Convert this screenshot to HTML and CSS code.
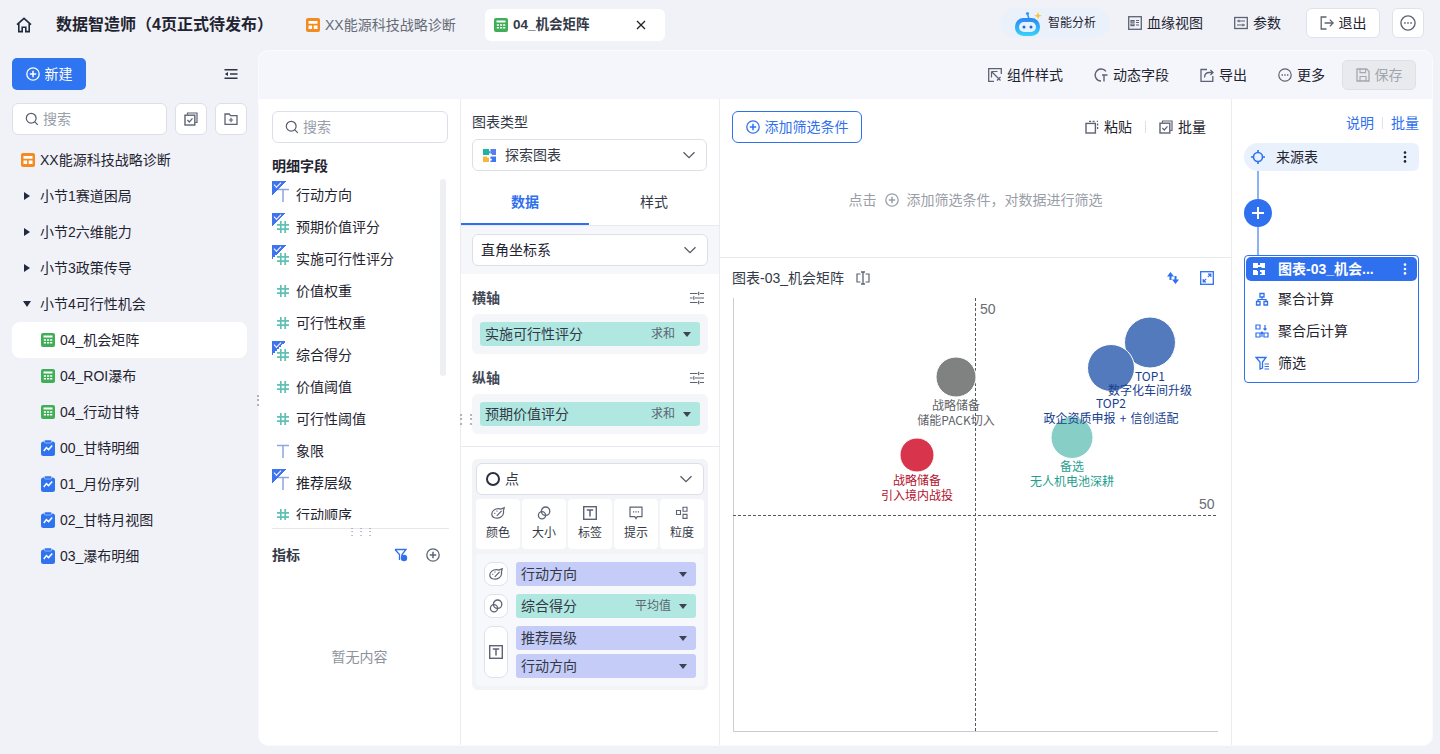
FILE: index.html
```html
<!DOCTYPE html>
<html lang="zh">
<head>
<meta charset="utf-8">
<title>数据智造师</title>
<link rel="stylesheet" href="styles.css">
</head>
<body>
<svg class="defs" width="0" height="0">
  <defs>
    <linearGradient id="rb" x1="0" y1="0" x2="0" y2="1"><stop offset="0" stop-color="#2c86f4"/><stop offset="1" stop-color="#37d3fb"/></linearGradient>
    <symbol id="dash" viewBox="0 0 14 14"><rect width="14" height="14" rx="2" fill="#f58a1f"/><path d="M2.5 3h9v2.800h-9zM2.500 7.600h3.600v3.400H2.500zM7.700 7.600h3.800v3.400H7.700z" fill="#fff"/></symbol>
    <symbol id="sheet" viewBox="0 0 14 14"><rect width="14" height="14" rx="2" fill="#3fae56"/><path d="M2.500 2.600h9v2h-9zM2.800 6.200h2.200v1.600H2.800zM6 6.200h2.200v1.600H6zM9.100 6.200h2.200v1.600H9.100zM2.800 9h2.200v1.600H2.800zM6 9h2.200v1.600H6zM9.100 9h2.200v1.600H9.100z" fill="#fff"/></symbol>
    <symbol id="wave" viewBox="0 0 14 16"><rect y="1.500" width="14" height="14.500" rx="2.500" fill="#2f74ee"/><rect x="3.500" y="0" width="7" height="3" rx="1" fill="#2f74ee" stroke="#cfe0fb" stroke-width=".6"/><path d="M2.800 11 5.400 7.600l2.200 2 3.600-4" fill="none" stroke="#fff" stroke-width="1.500"/></symbol>
    <symbol id="plusc" viewBox="0 0 14 14"><circle cx="7" cy="7" r="6.200" fill="none" stroke="currentColor" stroke-width="1.300"/><path d="M7 3.800v6.400M3.800 7h6.400" stroke="currentColor" stroke-width="1.500"/></symbol>
    <symbol id="search" viewBox="0 0 14 14"><circle cx="6.200" cy="6.200" r="4.900" fill="none" stroke="currentColor" stroke-width="1.200"/><path d="m9.800 9.800 3 3" stroke="currentColor" stroke-width="1.200"/></symbol>
    <symbol id="batch" viewBox="0 0 14 14"><path d="M3.500 2.800V1h9.500v9.500h-1.800" fill="none" stroke="currentColor" stroke-width="1.200"/><rect x="1" y="3.200" width="9.800" height="9.800" fill="none" stroke="currentColor" stroke-width="1.400"/><path d="m3.400 8 1.900 2 3.200-3.600" fill="none" stroke="currentColor" stroke-width="1.200"/></symbol>
    <symbol id="paste" viewBox="0 0 14 14"><rect x="1" y="3.400" width="9.400" height="9.600" fill="none" stroke="currentColor" stroke-width="1.400"/><path d="M4 1.300h2M7.600 1.300h2M11.800 1.300h1.200M12.600 3.500v2M12.600 7v2" stroke="currentColor" stroke-width="1.300"/></symbol>
    <symbol id="chev" viewBox="0 0 14 14"><path d="m1.500 4.200 5.500 5.500 5.500-5.500" fill="none" stroke="currentColor" stroke-width="1.300"/></symbol>
    <symbol id="sliders" viewBox="0 0 14 14"><path d="M0 2.500h7.500M10 2.500h4M0 7h2.500M5 7h9M0 11.500h7.500M10 11.500h4M8.700 .8v3.400M3.800 5.300v3.400M8.700 9.800v3.400" stroke="currentColor" stroke-width="1.200" fill="none"/></symbol>
    <symbol id="palette" viewBox="0 0 14 14"><path d="M.8 8C.8 4.800 4 2.600 7.400 2.600c1 0 1.800.2 2.600.5l3.200-1.400-.8 3.300c.5 2.200-.3 4.400-2.200 5.700-1.800 1.300-4.600 1.700-6.800 1C1.900 11.200.8 9.800.8 8Z" fill="none" stroke="currentColor" stroke-width="1.200"/><path d="m5.800 9.800 4.800-5M3.300 7.400h1M5.500 5.200h1" stroke="currentColor" stroke-width="1.200"/></symbol>
    <symbol id="size" viewBox="0 0 14 14"><circle cx="8.600" cy="5.200" r="4.200" fill="none" stroke="currentColor" stroke-width="1.300"/><circle cx="5" cy="9.200" r="3.600" fill="none" stroke="currentColor" stroke-width="1.300"/></symbol>
    <symbol id="label" viewBox="0 0 14 14"><rect x=".7" y=".7" width="12.600" height="12.600" fill="none" stroke="currentColor" stroke-width="1.400"/><path d="M3.800 4h6.400M7 4v6.400" stroke="currentColor" stroke-width="1.500"/></symbol>
    <symbol id="tip" viewBox="0 0 14 14"><path d="M1 1.200h12v9.400H8.200L7 12.600l-1.200-2H1Z" fill="none" stroke="currentColor" stroke-width="1.200"/><path d="M4 5.800h1.200M6.400 5.800h1.200M8.800 5.800H10" stroke="currentColor" stroke-width="1.300"/></symbol>
    <symbol id="grain" viewBox="0 0 14 14"><path d="M1.500 4.500h4v4h-4zM8 1.200h4v4H8zM8 8.400h4v4H8z" fill="none" stroke="currentColor" stroke-width="1.100"/></symbol>
    <symbol id="more" viewBox="0 0 14 14"><circle cx="7" cy="7" r="6.200" fill="none" stroke="currentColor" stroke-width="1.200"/><path d="M3.600 7h1.400M6.300 7h1.400M9 7h1.400" stroke="currentColor" stroke-width="1.400"/></symbol>
    <symbol id="puzzle" viewBox="0 0 14 14"><path d="M0 0h6.500v2.500H8v2H6.500V6.500H0z" fill="#20b3a4"/><path d="M8 0h6v6.500H9.500V5H8z" fill="#5b7cf0"/><path d="M0 8h4.500v1.500h2V14H0z" fill="#f5b83d"/><path d="M8 8h6v6H8v-1.500h1.500v-2H8z" fill="#3f78ee"/></symbol>
    <symbol id="dots" viewBox="0 0 14 14"><circle cx="7" cy="2.600" r="1.300" fill="currentColor"/><circle cx="7" cy="7" r="1.300" fill="currentColor"/><circle cx="7" cy="11.400" r="1.300" fill="currentColor"/></symbol>
    <symbol id="hash" viewBox="0 0 12 12"><path d="M3.800 0v12M8.200 0v12M0 3.800h12M0 8.200h12" stroke="#5fc0b3" stroke-width="1.700" fill="none"/></symbol>
    <symbol id="ttype" viewBox="0 0 12 14"><path d="M0 1.500h12M6 1.500V14" stroke="#8ea6de" stroke-width="1.500" fill="none"/></symbol>
  </defs>
</svg>

<div class="app">
  <header class="header">
    <svg class="home" viewBox="0 0 16 16"><path d="M1 7.600 8 1.400l7 6.200M2.800 6.400v8.200h3.400v-4.400h3.600v4.400h3.400V6.400" fill="none" stroke="#1f2a3c" stroke-width="1.600"/></svg>
    <h1 class="title">数据智造师（4页正式待发布）</h1>
    <div class="tab tab-off"><svg class="ic"><use href="#dash"/></svg><span>XX能源科技战略诊断</span></div>
    <div class="tab tab-on"><svg class="ic"><use href="#sheet"/></svg><span class="tab-name">04_机会矩阵</span><svg class="close" viewBox="0 0 10 10"><path d="m1 1 8 8M9 1 1 9" stroke="#222" stroke-width="1.300"/></svg></div>
    <div class="head-right">
      <div class="ai">
        <svg class="robot" viewBox="0 0 27 25"><path d="M14 8 12.500 3" stroke="#2d9cf5" stroke-width="1.600"/><circle cx="12.500" cy="2.500" r="1.600" fill="#2d9cf5"/><path d="m23 1 1 2.800 2.800 1-2.800 1-1 2.800-1-2.800-2.800-1 2.800-1z" fill="#f6c33c"/><rect x="0" y="7" width="25" height="18" rx="8.500" fill="url(#rb)"/><rect x="4" y="11" width="17" height="10" rx="5" fill="#e6f3ff"/><circle cx="9" cy="16" r="1.500" fill="#2762d8"/><circle cx="16" cy="16" r="1.500" fill="#2762d8"/></svg>
        <span>智能分析</span>
      </div>
      <div class="h-link lineage"><svg class="ic dim" viewBox="0 0 14 14"><rect x=".7" y=".7" width="12.600" height="12.600" fill="none" stroke="currentColor" stroke-width="1.300"/><path d="M3 4.500h3v1.600H3zM3 8h3v1.600H3zM8 4.500h3M8 9h3M8 6.500h3" stroke="currentColor" stroke-width="1.200" fill="none"/></svg><span>血缘视图</span></div>
      <div class="h-link params"><svg class="ic dim" viewBox="0 0 14 14"><rect x=".7" y="1.500" width="12.600" height="11" fill="none" stroke="currentColor" stroke-width="1.300"/><path d="M3 5h8M3 9h8M5 3.800v2.400M9 7.800v2.400" stroke="currentColor" stroke-width="1.200"/></svg><span>参数</span></div>
      <button class="h-btn exit"><svg class="ic dim" viewBox="0 0 14 14"><path d="M6.500 1H1.200v12h5.300" fill="none" stroke="currentColor" stroke-width="1.300"/><path d="M4.600 7h8.600M9.800 3.600 13.200 7l-3.400 3.400" fill="none" stroke="currentColor" stroke-width="1.300"/></svg><span>退出</span></button>
      <button class="h-btn kebab"><svg class="ic16 dim"><use href="#more"/></svg></button>
    </div>
  </header>

  <div class="body">
    <aside class="side">
      <div class="side-top">
        <button class="new"><svg class="ic"><use href="#plusc"/></svg><span>新建</span></button>
        <svg class="ic collapse" viewBox="0 0 14 14"><path d="M.5 2h13v1.600H.5zM6 6.200h7.500v1.600H6zM.5 10.400h13V12H.5zM4 5v4L.8 7z" fill="#2b3444"/></svg>
      </div>
      <div class="side-search">
        <div class="search"><svg class="ic"><use href="#search"/></svg><span>搜索</span></div>
        <button class="sq"><svg class="ic dim"><use href="#batch"/></svg></button>
        <button class="sq"><svg class="ic dim" viewBox="0 0 14 14"><path d="M1 2h4.200l1.400 1.600H13v8.800H1z" fill="none" stroke="currentColor" stroke-width="1.300"/><path d="M7 5.800v4.400M4.800 8h4.400" stroke="currentColor" stroke-width="1.200"/></svg></button>
      </div>
      <ul class="tree">
        <li class="node root"><svg class="ic"><use href="#dash"/></svg><span>XX能源科技战略诊断</span></li>
        <li class="node sec"><i class="tri-r"></i><span>小节1赛道困局</span></li>
        <li class="node sec"><i class="tri-r"></i><span>小节2六维能力</span></li>
        <li class="node sec"><i class="tri-r"></i><span>小节3政策传导</span></li>
        <li class="node sec"><i class="tri-d"></i><span>小节4可行性机会</span></li>
        <li class="node leaf on"><svg class="ic"><use href="#sheet"/></svg><span>04_机会矩阵</span></li>
        <li class="node leaf"><svg class="ic"><use href="#sheet"/></svg><span>04_ROI瀑布</span></li>
        <li class="node leaf"><svg class="ic"><use href="#sheet"/></svg><span>04_行动甘特</span></li>
        <li class="node leaf"><svg class="ic-w"><use href="#wave"/></svg><span>00_甘特明细</span></li>
        <li class="node leaf"><svg class="ic-w"><use href="#wave"/></svg><span>01_月份序列</span></li>
        <li class="node leaf"><svg class="ic-w"><use href="#wave"/></svg><span>02_甘特月视图</span></li>
        <li class="node leaf"><svg class="ic-w"><use href="#wave"/></svg><span>03_瀑布明细</span></li>
      </ul>
      <span class="grip grip-side">⋮</span>
    </aside>

    <main class="main">
      <div class="toolbar">
        <div class="t-item"><svg class="ic dim" viewBox="0 0 14 14"><path d="M13.300 6V.7H.7v12.600H6" fill="none" stroke="currentColor" stroke-width="1.300"/><path d="m3.500 3.500 9 9M3.500 3.500v6M3.500 3.500h6M9 12.500l3.500-3.500" fill="none" stroke="currentColor" stroke-width="1.200"/></svg><span>组件样式</span></div>
        <div class="t-item"><svg class="ic dim" viewBox="0 0 14 14"><path d="M12 3.400A6 6 0 1 0 7 13" fill="none" stroke="currentColor" stroke-width="1.400"/><path d="M8 7h5.500M10 7v6.500" stroke="currentColor" stroke-width="1.400"/></svg><span>动态字段</span></div>
        <div class="t-item"><svg class="ic dim" viewBox="0 0 14 14"><path d="M7 1.500H1v11.800h11.800V8" fill="none" stroke="currentColor" stroke-width="1.300"/><path d="M4.500 9.500c0-3 2-5 5-5H13M10.500 2 13 4.500 10.500 7" fill="none" stroke="currentColor" stroke-width="1.300"/></svg><span>导出</span></div>
        <div class="t-item"><svg class="ic dim"><use href="#more"/></svg><span>更多</span></div>
        <button class="save"><svg class="ic" viewBox="0 0 14 14"><path d="M1 1h9.600L13 3.400V13H1z" fill="none" stroke="currentColor" stroke-width="1.300"/><path d="M4 1v3.600h5.600V1M4 13V8.500h6V13" fill="none" stroke="currentColor" stroke-width="1.100"/></svg><span>保存</span></button>
      </div>

      <div class="cols">
        <section class="fields">
          <div class="search f-search"><svg class="ic"><use href="#search"/></svg><span>搜索</span></div>
          <h3 class="f-head">明细字段</h3>
          <div class="f-list">
            <div class="f-row"><i class="badge"></i><svg class="ic12 t-ic"><use href="#ttype"/></svg><span>行动方向</span></div>
            <div class="f-row"><i class="badge"></i><svg class="ic12"><use href="#hash"/></svg><span>预期价值评分</span></div>
            <div class="f-row"><i class="badge"></i><svg class="ic12"><use href="#hash"/></svg><span>实施可行性评分</span></div>
            <div class="f-row"><svg class="ic12"><use href="#hash"/></svg><span>价值权重</span></div>
            <div class="f-row"><svg class="ic12"><use href="#hash"/></svg><span>可行性权重</span></div>
            <div class="f-row"><i class="badge"></i><svg class="ic12"><use href="#hash"/></svg><span>综合得分</span></div>
            <div class="f-row"><svg class="ic12"><use href="#hash"/></svg><span>价值阈值</span></div>
            <div class="f-row"><svg class="ic12"><use href="#hash"/></svg><span>可行性阈值</span></div>
            <div class="f-row"><svg class="ic12 t-ic"><use href="#ttype"/></svg><span>象限</span></div>
            <div class="f-row"><i class="badge"></i><svg class="ic12 t-ic"><use href="#ttype"/></svg><span>推荐层级</span></div>
            <div class="f-row"><svg class="ic12"><use href="#hash"/></svg><span>行动顺序</span></div>
            <i class="thumb"></i>
          </div>
          <div class="f-split"><span>⋮⋮⋮</span></div>
          <div class="m-head"><h3>指标</h3><div class="m-icons"><svg class="ic blue" viewBox="0 0 14 14"><path d="M1 1.500h11L8 6.500V10" fill="none" stroke="currentColor" stroke-width="1.300"/><path d="M1 1.500 5.500 6.500V12" fill="none" stroke="currentColor" stroke-width="1.300"/><circle cx="10" cy="10" r="3.200" fill="currentColor"/></svg><svg class="ic dim"><use href="#plusc"/></svg></div></div>
          <p class="empty">暂无内容</p>
        </section>

        <section class="config">
          <div class="c-type">
            <div class="c-label">图表类型</div>
            <div class="select"><svg class="ic12 puzzle"><use href="#puzzle"/></svg><span class="sel-text">探索图表</span><svg class="ic chev"><use href="#chev"/></svg></div>
          </div>
          <div class="tabs"><div class="ctab on">数据</div><div class="ctab">样式</div></div>
          <div class="coord"><div class="select wide"><span class="sel-text dark">直角坐标系</span><svg class="ic chev"><use href="#chev"/></svg></div></div>
          <div class="axis">
            <div class="ax-head"><b>横轴</b><svg class="ic dim"><use href="#sliders"/></svg></div>
            <div class="well"><div class="pill green"><span>实施可行性评分</span><em>求和</em><i class="caret"></i></div></div>
            <div class="ax-head ax2"><b>纵轴</b><svg class="ic dim"><use href="#sliders"/></svg></div>
            <div class="well"><div class="pill green"><span>预期价值评分</span><em>求和</em><i class="caret"></i></div></div>
          </div>
          <div class="marks">
            <div class="select mark-sel"><i class="ring"></i><span class="sel-dot">点</span><svg class="ic chev"><use href="#chev"/></svg></div>
            <div class="enc">
              <div class="enc-b"><svg class="ic dim"><use href="#palette"/></svg><span>颜色</span></div>
              <div class="enc-b"><svg class="ic dim"><use href="#size"/></svg><span>大小</span></div>
              <div class="enc-b"><svg class="ic dim"><use href="#label"/></svg><span>标签</span></div>
              <div class="enc-b"><svg class="ic dim"><use href="#tip"/></svg><span>提示</span></div>
              <div class="enc-b"><svg class="ic dim"><use href="#grain"/></svg><span>粒度</span></div>
            </div>
            <div class="bind">
              <div class="b-row"><div class="b-ic"><svg class="ic dim"><use href="#palette"/></svg></div><div class="pill purple"><span>行动方向</span><i class="caret"></i></div></div>
              <div class="b-row"><div class="b-ic"><svg class="ic dim"><use href="#size"/></svg></div><div class="pill green"><span>综合得分</span><em>平均值</em><i class="caret"></i></div></div>
              <div class="b-row"><div class="b-ic tall"><svg class="ic dim"><use href="#label"/></svg></div>
                <div class="b-stack"><div class="pill purple"><span>推荐层级</span><i class="caret"></i></div><div class="pill purple"><span>行动方向</span><i class="caret"></i></div></div>
              </div>
            </div>
          </div>
          <span class="grip grip-cfg">⋮⋮</span>
        </section>

        <section class="center">
          <div class="filter">
            <div class="f-top">
              <button class="add"><svg class="ic"><use href="#plusc"/></svg><span>添加筛选条件</span></button>
              <div class="f-acts">
                <div class="act"><svg class="ic dim"><use href="#paste"/></svg><span>粘贴</span></div>
                <i class="vsep"></i>
                <div class="act"><svg class="ic dim"><use href="#batch"/></svg><span>批量</span></div>
              </div>
            </div>
            <div class="hint"><span>点击</span><svg class="ic"><use href="#plusc"/></svg><span>添加筛选条件，对数据进行筛选</span></div>
          </div>
          <div class="chart-head">
            <span>图表-03_机会矩阵</span>
            <svg class="ic dim" viewBox="0 0 14 14"><path d="M4.500 3H1v8h3.500M9.500 3H13v8H9.500" fill="none" stroke="currentColor" stroke-width="1.200"/><path d="M5 1h4M5 13h4M7 1v12" stroke="currentColor" stroke-width="1.300"/></svg>
            <div class="ch-right">
              <svg class="ic blue" viewBox="0 0 14 14"><path d="M4.500 1 1 5.500h2.500V9h2V5.500H8zM9.500 13 13 8.500h-2.500V5h-2v3.500H6z" fill="currentColor"/></svg>
              <svg class="ic blue" viewBox="0 0 14 14"><rect x=".7" y=".7" width="12.600" height="12.600" fill="none" stroke="currentColor" stroke-width="1.300"/><path d="M8 3.200h2.800V6M10.800 3.200 7.800 6.200M6 10.800H3.200V8M3.200 10.800l3-3" fill="none" stroke="currentColor" stroke-width="1.200"/></svg>
            </div>
          </div>
          <svg class="plot" viewBox="720 288 512 458" width="512" height="458">
            <path d="M733.500 298v433.500H1218" fill="none" stroke="#c9ccd3"/>
            <path d="M975.500 298v433M733 515.500h484" fill="none" stroke="#55585f" stroke-dasharray="3 2"/>
            <text class="tick" x="980" y="314">50</text>
            <text class="tick" x="1199" y="509">50</text>
            <circle cx="1150" cy="342.500" r="25.500" fill="#527abd" stroke="#fff"/>
            <circle cx="1111" cy="368" r="23.500" fill="#527abd" stroke="#fff"/>
            <circle cx="956" cy="377" r="20" fill="#808281" stroke="#fff"/>
            <circle cx="917" cy="455" r="17" fill="#d8344c" stroke="#fff"/>
            <circle cx="1072" cy="437.500" r="21" fill="#86cec6" stroke="#fff"/>
            <g class="lb navy"><text x="1150" y="381">TOP1</text><text x="1150" y="395">数字化车间升级</text><text x="1111" y="408">TOP2</text><text x="1111" y="423">政企资质申报 + 信创适配</text></g>
            <g class="lb grey"><text x="956" y="410">战略储备</text><text x="956" y="425">储能PACK切入</text></g>
            <g class="lb red"><text x="917" y="485">战略储备</text><text x="917" y="500">引入境内战投</text></g>
            <g class="lb teal"><text x="1072" y="471">备选</text><text x="1072" y="486">无人机电池深耕</text></g>
          </svg>
        </section>

        <section class="flow">
          <div class="fl-top"><span>说明</span><i class="vsep"></i><span>批量</span></div>
          <div class="src"><svg class="ic blue" viewBox="0 0 14 14"><circle cx="7" cy="7" r="4.500" fill="none" stroke="currentColor" stroke-width="1.600"/><path d="M7 0v3M7 11v3M0 7h3M11 7h3" stroke="currentColor" stroke-width="1.600"/></svg><span>来源表</span><svg class="ic kb"><use href="#dots"/></svg></div>
          <i class="conn"></i>
          <div class="plus"><svg class="ic" viewBox="0 0 14 14"><path d="M7 1v12M1 7h12" stroke="#fff" stroke-width="2"/></svg></div>
          <i class="conn"></i>
          <div class="card">
            <div class="card-head"><svg class="ic" viewBox="0 0 14 14"><path d="M1 1h5v2h2v2H6v1H1zM8 1h5v5H9.500V5H8zM1 8h4v1h1v4H1zM8 8h5v5H8v-1h1.500v-2H8z" fill="#fff"/></svg><span>图表-03_机会...</span><svg class="ic kb"><use href="#dots"/></svg></div>
            <div class="card-row"><svg class="ic blue" viewBox="0 0 14 14"><path d="M5 1.500h4v3.500H5zM1.500 9.500h3.500V13H1.500zM9 9.500h3.500V13H9z" fill="none" stroke="currentColor" stroke-width="1.300"/><path d="M7 5v2.500M3 9.500V7.500h8v2" fill="none" stroke="currentColor" stroke-width="1.200"/></svg><span>聚合计算</span></div>
            <div class="card-row"><svg class="ic blue" viewBox="0 0 14 14"><path d="M1 1h4v4H1zM1 9h4v4H1zM9 9h4v4H9z" fill="none" stroke="currentColor" stroke-width="1.200"/><path d="M10 1v5M8.500 4.500 10 6l1.500-1.500M7 13V8M5.500 9.500 7 8l1.500 1.500" fill="none" stroke="currentColor" stroke-width="1.200"/></svg><span>聚合后计算</span></div>
            <div class="card-row"><svg class="ic blue" viewBox="0 0 14 14"><path d="M1 1.500h10L7.500 6v6L5 13V6z" fill="none" stroke="currentColor" stroke-width="1.300"/><path d="M9.500 8H14M9.500 10.500H14M9.500 13H14" stroke="currentColor" stroke-width="1.100"/></svg><span>筛选</span></div>
          </div>
        </section>
      </div>
    </main>
  </div>
</div>
</body>
</html>
```

FILE: styles.css
```css
* { box-sizing: border-box; }
html, body { margin: 0; height: 100%; }
body {
  width: 1440px; height: 754px; overflow: hidden;
  background: #f0f2f8; color: #1f2430;
  font: 14px/20px "Liberation Sans", "Noto Sans CJK SC", sans-serif;
}
button { font: inherit; color: inherit; padding: 0; background: none; border: 0; }
h1, h3, p, ul { margin: 0; padding: 0; list-style: none; }
i, em { font-style: normal; display: block; }
.defs { position: absolute; }
.ic { width: 14px; height: 14px; flex: none; display: block; }
.ic-w { width: 14px; height: 16px; flex: none; display: block; }
.ic12 { width: 12px; height: 12px; flex: none; display: block; }
.ic16 { width: 16px; height: 16px; display: block; }
.dim { color: #5d6373; }
.blue { color: #2f70ee; }

.app { height: 754px; display: flex; flex-direction: column; }

/* header */
.header { height: 50px; display: flex; align-items: center; padding-left: 16px; flex: none; }
.home { width: 16px; height: 16px; flex: none; }
.title { font-size: 16px; font-weight: 700; margin-left: 24px; width: 234px; white-space: nowrap; color: #1f2430; line-height: 22px; }
.tab { height: 32px; display: flex; align-items: center; gap: 5px; white-space: nowrap; }
.tab-off { width: 195px; color: #656a75; padding-left: 16px; flex: none; }
.tab-on { background: #fff; border-radius: 6px; width: 180px; padding: 0 9px; color: #1f2430; flex: none; }
.tab-name { font-weight: 700; color: #333947; font-size: 13.500px; }
.close { width: 10px; height: 10px; margin-left: auto; margin-right: 10px; }
.head-right { margin-left: auto; display: flex; align-items: center; padding-right: 16px; align-self: flex-start; margin-top: 8px; }
.ai { width: 110px; height: 30px; border-radius: 15px; background: #ebf1fb; display: flex; align-items: center; font-size: 12px; padding-left: 15px; gap: 6px; margin-right: 18px; }
.robot { width: 27px; height: 25px; flex: none; }
.h-link { display: flex; align-items: center; gap: 5px; }
.lineage { margin-right: 31px; }
.params { margin-right: 25px; }
.h-btn { height: 30px; background: #fff; border: 1px solid #dfe2ea; border-radius: 6px; display: flex; align-items: center; justify-content: center; gap: 5px; }
.exit { width: 74px; }
.kebab { width: 32px; margin-left: 12px; }

/* body */
.body { height: 696px; display: flex; flex: none; }
.side { width: 258px; flex: none; position: relative; }
.side-top { display: flex; align-items: center; justify-content: space-between; padding: 8px 20px 0 12px; }
.new { width: 74px; height: 32px; border-radius: 5px; background: #2f74f0; color: #fff; display: flex; align-items: center; justify-content: center; gap: 5px; }
.side-search { display: flex; padding: 13px 0 0 12px; gap: 8px; }
.search { height: 32px; width: 155px; background: #fff; border: 1px solid #dcdfe8; border-radius: 6px; display: flex; align-items: center; gap: 4px; padding-left: 12px; color: #9a9ea8; }
.search .ic { color: #555b68; }
.sq { width: 32px; height: 32px; background: #fff; border: 1px solid #dcdfe8; border-radius: 6px; display: flex; align-items: center; justify-content: center; }
.tree { margin-top: 7px; }
.node { height: 36px; display: flex; align-items: center; }
.root { padding-left: 21px; gap: 5px; }
.sec { padding-left: 24px; gap: 11px; }
.leaf { margin-left: 12px; width: 235px; border-radius: 8px; gap: 5px; padding-left: 29px; }
.on.leaf { background: #fff; }
.tri-r { width: 0; height: 0; border-left: 6px solid #1f2a3c; border-top: 4.500px solid transparent; border-bottom: 4.500px solid transparent; margin-right: -1px; }
.tri-d { width: 0; height: 0; border-top: 6px solid #1f2a3c; border-left: 4.500px solid transparent; border-right: 4.500px solid transparent; margin-left: -1px; margin-right: -2px; }
.grip { position: absolute; color: #8c9099; font-size: 12px; line-height: 12px; }
.grip-side { left: 252px; top: 344px; }

/* main */
.main { width: 1175px; flex: none; border: 1px solid #fafbfe; border-radius: 10px; background: #fff; overflow: hidden; display: flex; flex-direction: column; }
.toolbar { height: 48px; flex: none; background: #f5f6fb; display: flex; align-items: center; justify-content: flex-end; padding: 0 16px 1px 0; gap: 31px; }
.t-item { display: flex; align-items: center; gap: 5px; }
.save { width: 74px; height: 30px; margin-left: -14px; background: #e9eaee; border: 1px solid #dfe0e5; border-radius: 5px; color: #a3a6ae; display: flex; align-items: center; justify-content: center; gap: 5px; }
.cols { flex: 1; display: flex; min-height: 0; }

/* fields */
.fields { width: 202px; flex: none; border-right: 1px solid #ececf0; padding: 12px 0 0 13px; }
.f-search { width: 176px; }
.f-head { font-size: 14px; font-weight: 700; margin-top: 13px; line-height: 20px; color: #1f2430; }
.f-list { height: 341px; margin-top: 3px; margin-left: -13px; overflow: hidden; position: relative; }
.f-row { height: 32px; display: flex; align-items: center; position: relative; padding-left: 18px; gap: 7px; }
.t-ic { height: 14px; }
.badge { position: absolute; left: 13px; top: 2px; width: 14px; height: 14px; background: linear-gradient(135deg, #3f74ee 50%, transparent 50%); z-index: 1; }
.badge::after { content: ""; position: absolute; left: 2px; top: 1px; width: 6px; height: 3px; border-left: 1px solid #fff; border-bottom: 1px solid #fff; transform: rotate(-45deg); }
.thumb { position: absolute; left: 181px; top: 0; width: 6px; height: 197px; border-radius: 3px; background: #eeeff3; }
.f-split { margin-right: 11px; border-bottom: 1px solid #e6e7ec; text-align: center; color: #8c9099; font-size: 10px; letter-spacing: -1px; height: 9px; line-height: 24px; }
.m-head { display: flex; justify-content: space-between; align-items: center; margin-top: 16px; padding-right: 20px; }
.m-head h3 { font-size: 14px; font-weight: 700; color: #333947; }
.m-icons { display: flex; gap: 18px; }
.empty { text-align: center; color: #8e929b; font-size: 14px; margin: 82px 13px 0 0; }

/* config */
.config { width: 259px; flex: none; border-right: 1px solid #ececf0; position: relative; }
.c-type { padding: 13px 12px 0 11px; }
.c-label { line-height: 20px; color: #333947; }
.select { height: 32px; width: 235px; margin-top: 7px; background: #fff; border: 1px solid #dcdfe8; border-radius: 6px; display: flex; align-items: center; padding: 0 10px; }
.sel-text { margin-left: 9px; color: #333947; }
.sel-text.dark { margin-left: 0; color: #1f2430; }
.puzzle { width: 13px; height: 13px; }
.chev { margin-left: auto; color: #555b68; }
.tabs { display: flex; height: 54px; margin-top: 1px; border-bottom: 1px solid #e9eaef; }
.ctab { width: 130px; text-align: center; line-height: 60px; color: #333947; height: 53px; }
.ctab.on { width: 128px; color: #2f70ee; font-weight: 700; border-bottom: 2px solid #2f70ee; }
.coord { height: 48px; background: #f6f7fa; padding: 8px 0 0 11px; }
.wide { margin: 0; width: 236px; padding-left: 8px; }
.axis { padding: 14px 11px 12px; border-bottom: 1px solid #e9eaef; width: 259px; height: 173px; }
.ax-head { height: 20px; display: flex; justify-content: space-between; align-items: center; padding-right: 5px; }
.ax-head b { color: #444a58; }
.ax2 { margin-top: 14px; }
.well { width: 236px; height: 40px; margin-top: 6px; background: #f5f6f9; border-radius: 6px; padding: 8px; }
.pill { height: 24px; border-radius: 3px; display: flex; align-items: center; padding: 0 9px 0 5px; color: #333947; }
.pill em { margin-left: auto; color: #5b6470; font-size: 12px; }
.pill span + .caret { margin-left: auto; }
.pill em + .caret { margin-left: 8px; }
.green { background: #b0e8e1; }
.purple { background: #c4ccf7; }
.caret { width: 0; height: 0; border-top: 5px solid #3c4352; border-left: 4px solid transparent; border-right: 4px solid transparent; }
.marks { margin: 12px 0 0 11px; width: 236px; height: 231px; background: #f3f4f8; border-radius: 6px; padding: 4px; }
.mark-sel { width: 228px; margin: 0; padding-left: 9px; }
.ring { width: 14px; height: 14px; border: 2px solid #2b3040; border-radius: 50%; }
.sel-dot { margin-left: 5px; color: #333947; }
.enc { display: flex; gap: 2px; margin-top: 4px; }
.enc-b { width: 44px; height: 50px; background: #fff; border-radius: 4px; display: flex; flex-direction: column; align-items: center; padding-top: 7px; font-size: 12px; line-height: 18px; gap: 4px; color: #333947; }
.bind { margin-top: 5px; height: 132px; background: #f7f8fb; border-radius: 4px; padding: 8px 8px 0; }
.b-row { display: flex; gap: 8px; margin-bottom: 8px; }
.b-row > .pill { flex: 1; }
.b-ic { width: 24px; height: 24px; flex: none; background: #fff; border: 1px solid #dfe2ea; border-radius: 8px; display: flex; align-items: center; justify-content: center; }
.b-ic.tall { height: 52px; }
.b-stack { flex: 1; display: flex; flex-direction: column; gap: 4px; }
.grip-cfg { left: -6px; top: 314px; letter-spacing: -2px; }

/* center */
.center { width: 512px; flex: none; border-right: 1px solid #ececf0; }
.filter { height: 159px; border-bottom: 1px solid #e9eaef; padding: 12px 12px 0; }
.f-top { display: flex; justify-content: space-between; align-items: center; }
.add { width: 130px; height: 32px; border: 1px solid #2f70ee; border-radius: 6px; color: #2f70ee; display: flex; align-items: center; justify-content: center; gap: 5px; }
.f-acts { display: flex; align-items: center; gap: 13px; padding-right: 13px; }
.act { display: flex; align-items: center; gap: 5px; }
.vsep { width: 1px; height: 12px; background: #dfe1e7; }
.hint { display: flex; align-items: center; justify-content: center; color: #9a9ea8; gap: 8px; margin-top: 47px; }
.chart-head { height: 40px; display: flex; align-items: center; padding: 0 17px 0 12px; gap: 12px; color: #333947; }
.ch-right { margin-left: auto; display: flex; gap: 20px; }
.plot { display: block; margin-top: -10px; }
.tick { font: 14px "Liberation Sans", sans-serif; fill: #6a6d74; }
.lb text { font: 12px "Noto Sans CJK SC", sans-serif; text-anchor: middle; word-spacing: 1.500px; }
.navy { fill: #17408f; }
.grey { fill: #5f6368; }
.red { fill: #b3122e; }
.teal { fill: #1fa08f; }

/* flow */
.flow { flex: 1; padding: 14px 0 0 12px; width: 200px; }
.fl-top { width: 175px; display: flex; justify-content: flex-end; align-items: center; gap: 8px; color: #2f70ee; }
.src { width: 175px; height: 28px; margin-top: 10px; border-radius: 14px 6px 6px 14px; background: #e9f1fc; display: flex; align-items: center; padding: 0 7px; gap: 11px; color: #1f2430; }
.kb { margin-left: auto; }
.conn { width: 2px; height: 28px; margin-left: 13px; background: #8ab2f5; }
.plus { width: 28px; height: 28px; border-radius: 50%; background: #2f70ee; display: flex; align-items: center; justify-content: center; }
.card { width: 175px; height: 128px; border: 1px solid #2f70ee; border-radius: 4px; padding: 1px; }
.card-head { height: 24px; background: #2f70ee; border-radius: 5px; color: #fff; font-weight: 700; display: flex; align-items: center; padding: 0 5px 0 6px; gap: 12px; white-space: nowrap; }
.card-row { height: 32px; display: flex; align-items: center; padding-left: 9px; gap: 9px; }
.card-head + .card-row { margin-top: 2px; }
```
